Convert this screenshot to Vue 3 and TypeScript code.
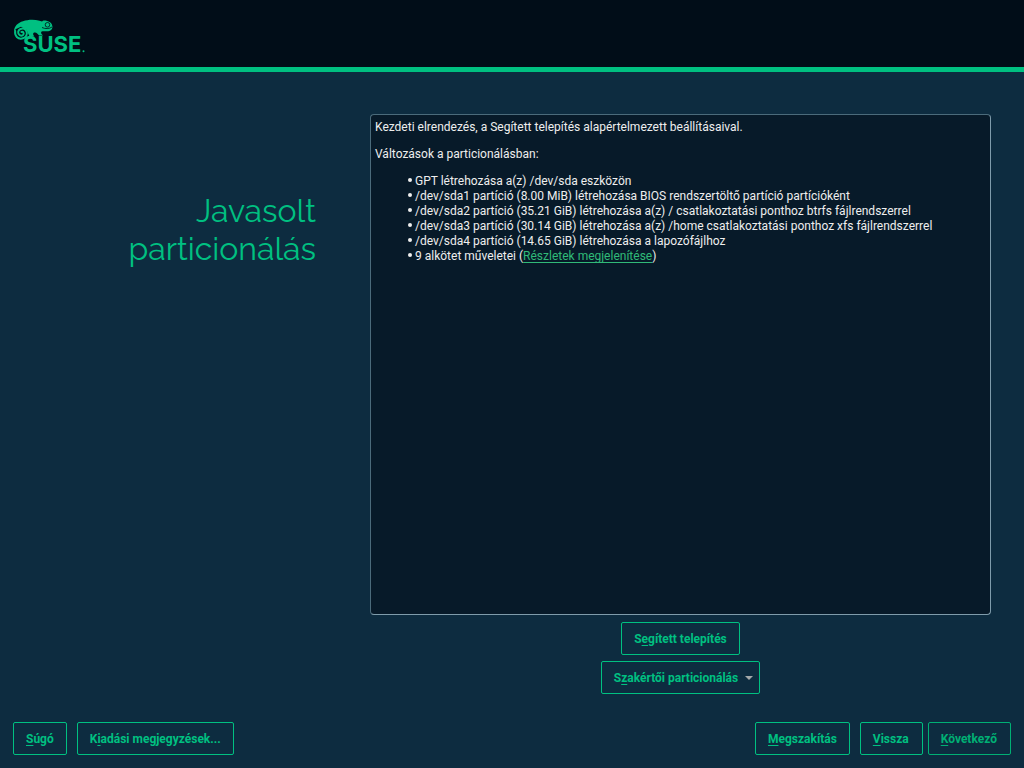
<script setup lang="ts">
interface ActionLabel {
  before: string
  key: string
  after: string
}

const changes: string[] = [
  'GPT létrehozása a(z) /dev/sda eszközön',
  '/dev/sda1 partíció (8.00 MiB) létrehozása BIOS rendszertöltő partíció partícióként',
  '/dev/sda2 partíció (35.21 GiB) létrehozása a(z) / csatlakoztatási ponthoz btrfs fájlrendszerrel',
  '/dev/sda3 partíció (30.14 GiB) létrehozása a(z) /home csatlakoztatási ponthoz xfs fájlrendszerrel',
  '/dev/sda4 partíció (14.65 GiB) létrehozása a lapozófájlhoz',
]

const infoActions: ActionLabel[] = [
  { before: '', key: 'S', after: 'úgó' },
  { before: 'K', key: 'i', after: 'adási megjegyzések...' },
]
</script>

<template>
  <div class="installer">
    <header class="banner">
      <svg class="logo" viewBox="0 0 76 38" role="img" aria-label="SUSE">
        <path
          class="body"
          d="M1 13.500C1.200 8 5 4.500 10 3.200C15 1.500 21 1.200 26.500 2.700L29 3.600C29.600 2.400 31.500 2.200 33.500 2.800C36.500 3.500 39 5 39.400 8.200C39.600 11.500 37.500 13 34 13.300L30 13.200C28 13 27.500 14.500 28.800 16.300L30 17.500H26C25 16 23.500 14.500 22 14.500C19.800 14.500 19.500 16.500 21.500 18.500H16.500L13.500 12L8 8.800L3 11Z"
        />
        <path
          class="tail"
          d="M2.200 13C1.400 18 5 21.300 9 20.600C13.500 19.900 15 15.500 13 12.500C10.800 9.400 5.800 10.300 5.200 13.900C4.800 16.900 8 18.600 10 17C11.500 15.600 10.300 13.300 8.400 14"
        />
        <circle class="eye" cx="34.500" cy="6.800" r="2.300" />
        <circle class="body" cx="35" cy="6.500" r="0.800" />
        <path class="groove" d="M29 9.500C32 11 36.500 11 39 9" />
        <text class="wordmark" x="10" y="34">SUSE</text>
        <circle class="body" cx="70.500" cy="33.300" r="1" />
      </svg>
    </header>

    <main class="content">
      <h1 class="title">Javasolt particionálás</h1>

      <div class="proposal">
        <section class="summary" aria-label="Javasolt particionálás">
          <p>Kezdeti elrendezés, a Segített telepítés alapértelmezett beállításaival.</p>
          <p>Változások a particionálásban:</p>
          <ul>
            <li v-for="change in changes" :key="change">{{ change }}</li>
            <li>9 alkötet műveletei (<a href="#details">Részletek megjelenítése</a>)</li>
          </ul>
        </section>
        <button type="button" class="action">S<u>e</u>gített telepítés</button>
        <button type="button" class="action menu" aria-haspopup="menu">
          <span>S<u>z</u>akértői particionálás</span>
          <svg class="arrow" viewBox="0 0 8 4" aria-hidden="true"><path d="M0 0H8L4 4Z" /></svg>
        </button>
      </div>
    </main>

    <footer class="navigation">
      <div class="group info">
        <button v-for="item in infoActions" :key="item.after" type="button" class="action">
          {{ item.before }}<u>{{ item.key }}</u>{{ item.after }}
        </button>
      </div>
      <div class="group wizard">
        <button type="button" class="action"><u>M</u>egszakítás</button>
        <div class="group steps">
          <button type="button" class="action"><u>V</u>issza</button>
          <button type="button" class="action next"><u>K</u>övetkező</button>
        </div>
      </div>
    </footer>
  </div>
</template>

<style>
body {
  background: #0d2c40;
}
</style>

<style scoped>
.installer {
  box-sizing: border-box;
  display: flex;
  flex-direction: column;
  min-height: 100vh;
  background: #0d2c40;
  color: #eeeeee;
  font-family: Roboto, "Liberation Sans", sans-serif;
  font-size: 12px;
  line-height: 15px;
}

.banner {
  display: flex;
  padding: 18px 13px 11px;
  background: #010d18;
  border-bottom: 5px solid #00c081;
}

.logo {
  display: block;
  width: 76px;
  height: 38px;
}

.body {
  fill: #00c081;
}

.eye,
.groove {
  fill: none;
  stroke: #010d18;
  stroke-width: 0.8;
}

.tail {
  fill: none;
  stroke: #00c081;
  stroke-width: 2;
  stroke-linecap: round;
}

.wordmark {
  fill: #00c081;
  font-family: Inter, sans-serif;
  font-size: 22px;
  font-weight: 700;
}

.content {
  flex: 1;
  display: grid;
  grid-template-columns: minmax(0, 316fr) minmax(0, 621fr);
  column-gap: 54px;
  padding: 42px 33px 28px 0;
}

.title {
  justify-self: end;
  max-width: 240px;
  margin: 78px 0 0;
  color: #00c081;
  font-family: Raleway, Lato, sans-serif;
  font-size: 32px;
  font-weight: 400;
  line-height: 38px;
  text-align: right;
}

.proposal {
  display: flex;
  flex-direction: column;
  align-items: center;
  gap: 6px;
}

.summary {
  box-sizing: border-box;
  flex: 1;
  align-self: stretch;
  padding: 5px 4px;
  margin-bottom: 1px;
  background: #071a29;
  border: 1px solid #7f9cab;
  border-top-color: #4b6b7b;
  border-left-color: #4b6b7b;
  border-radius: 4px;
}

.summary p {
  margin: 0 0 12px;
}

.summary ul {
  margin: 0;
  padding: 0 0 0 40px;
  list-style: none;
}

.summary li::before {
  content: "";
  display: inline-block;
  width: 4px;
  height: 4px;
  margin: 0 3px 3px -7px;
  border-radius: 50%;
  background: #eeeeee;
  vertical-align: middle;
}

.summary a {
  color: #30ba78;
  text-underline-offset: 2px;
  text-decoration-skip-ink: none;
}

.action {
  box-sizing: border-box;
  height: 33px;
  padding: 2px 12px 0;
  background: transparent;
  border: 1px solid #00c081;
  border-radius: 2px;
  color: #00c081;
  font: inherit;
  font-weight: 700;
  white-space: nowrap;
}

.action u {
  text-underline-offset: 2px;
  text-decoration-thickness: 1px;
  text-decoration-skip-ink: none;
}

.menu {
  display: flex;
  align-items: center;
  gap: 7px;
  padding-right: 6px;
}

.arrow {
  width: 8px;
  height: 4px;
  margin-bottom: 2px;
  fill: #a4a9aa;
}

.next {
  color: #00b074;
  border-color: #00b074;
}

.navigation {
  display: flex;
  justify-content: space-between;
  padding: 0 13px 13px;
}

.group {
  display: flex;
  gap: 10px;
}

.steps {
  gap: 5px;
}

.steps .action {
  padding-right: 13px;
}
</style>
